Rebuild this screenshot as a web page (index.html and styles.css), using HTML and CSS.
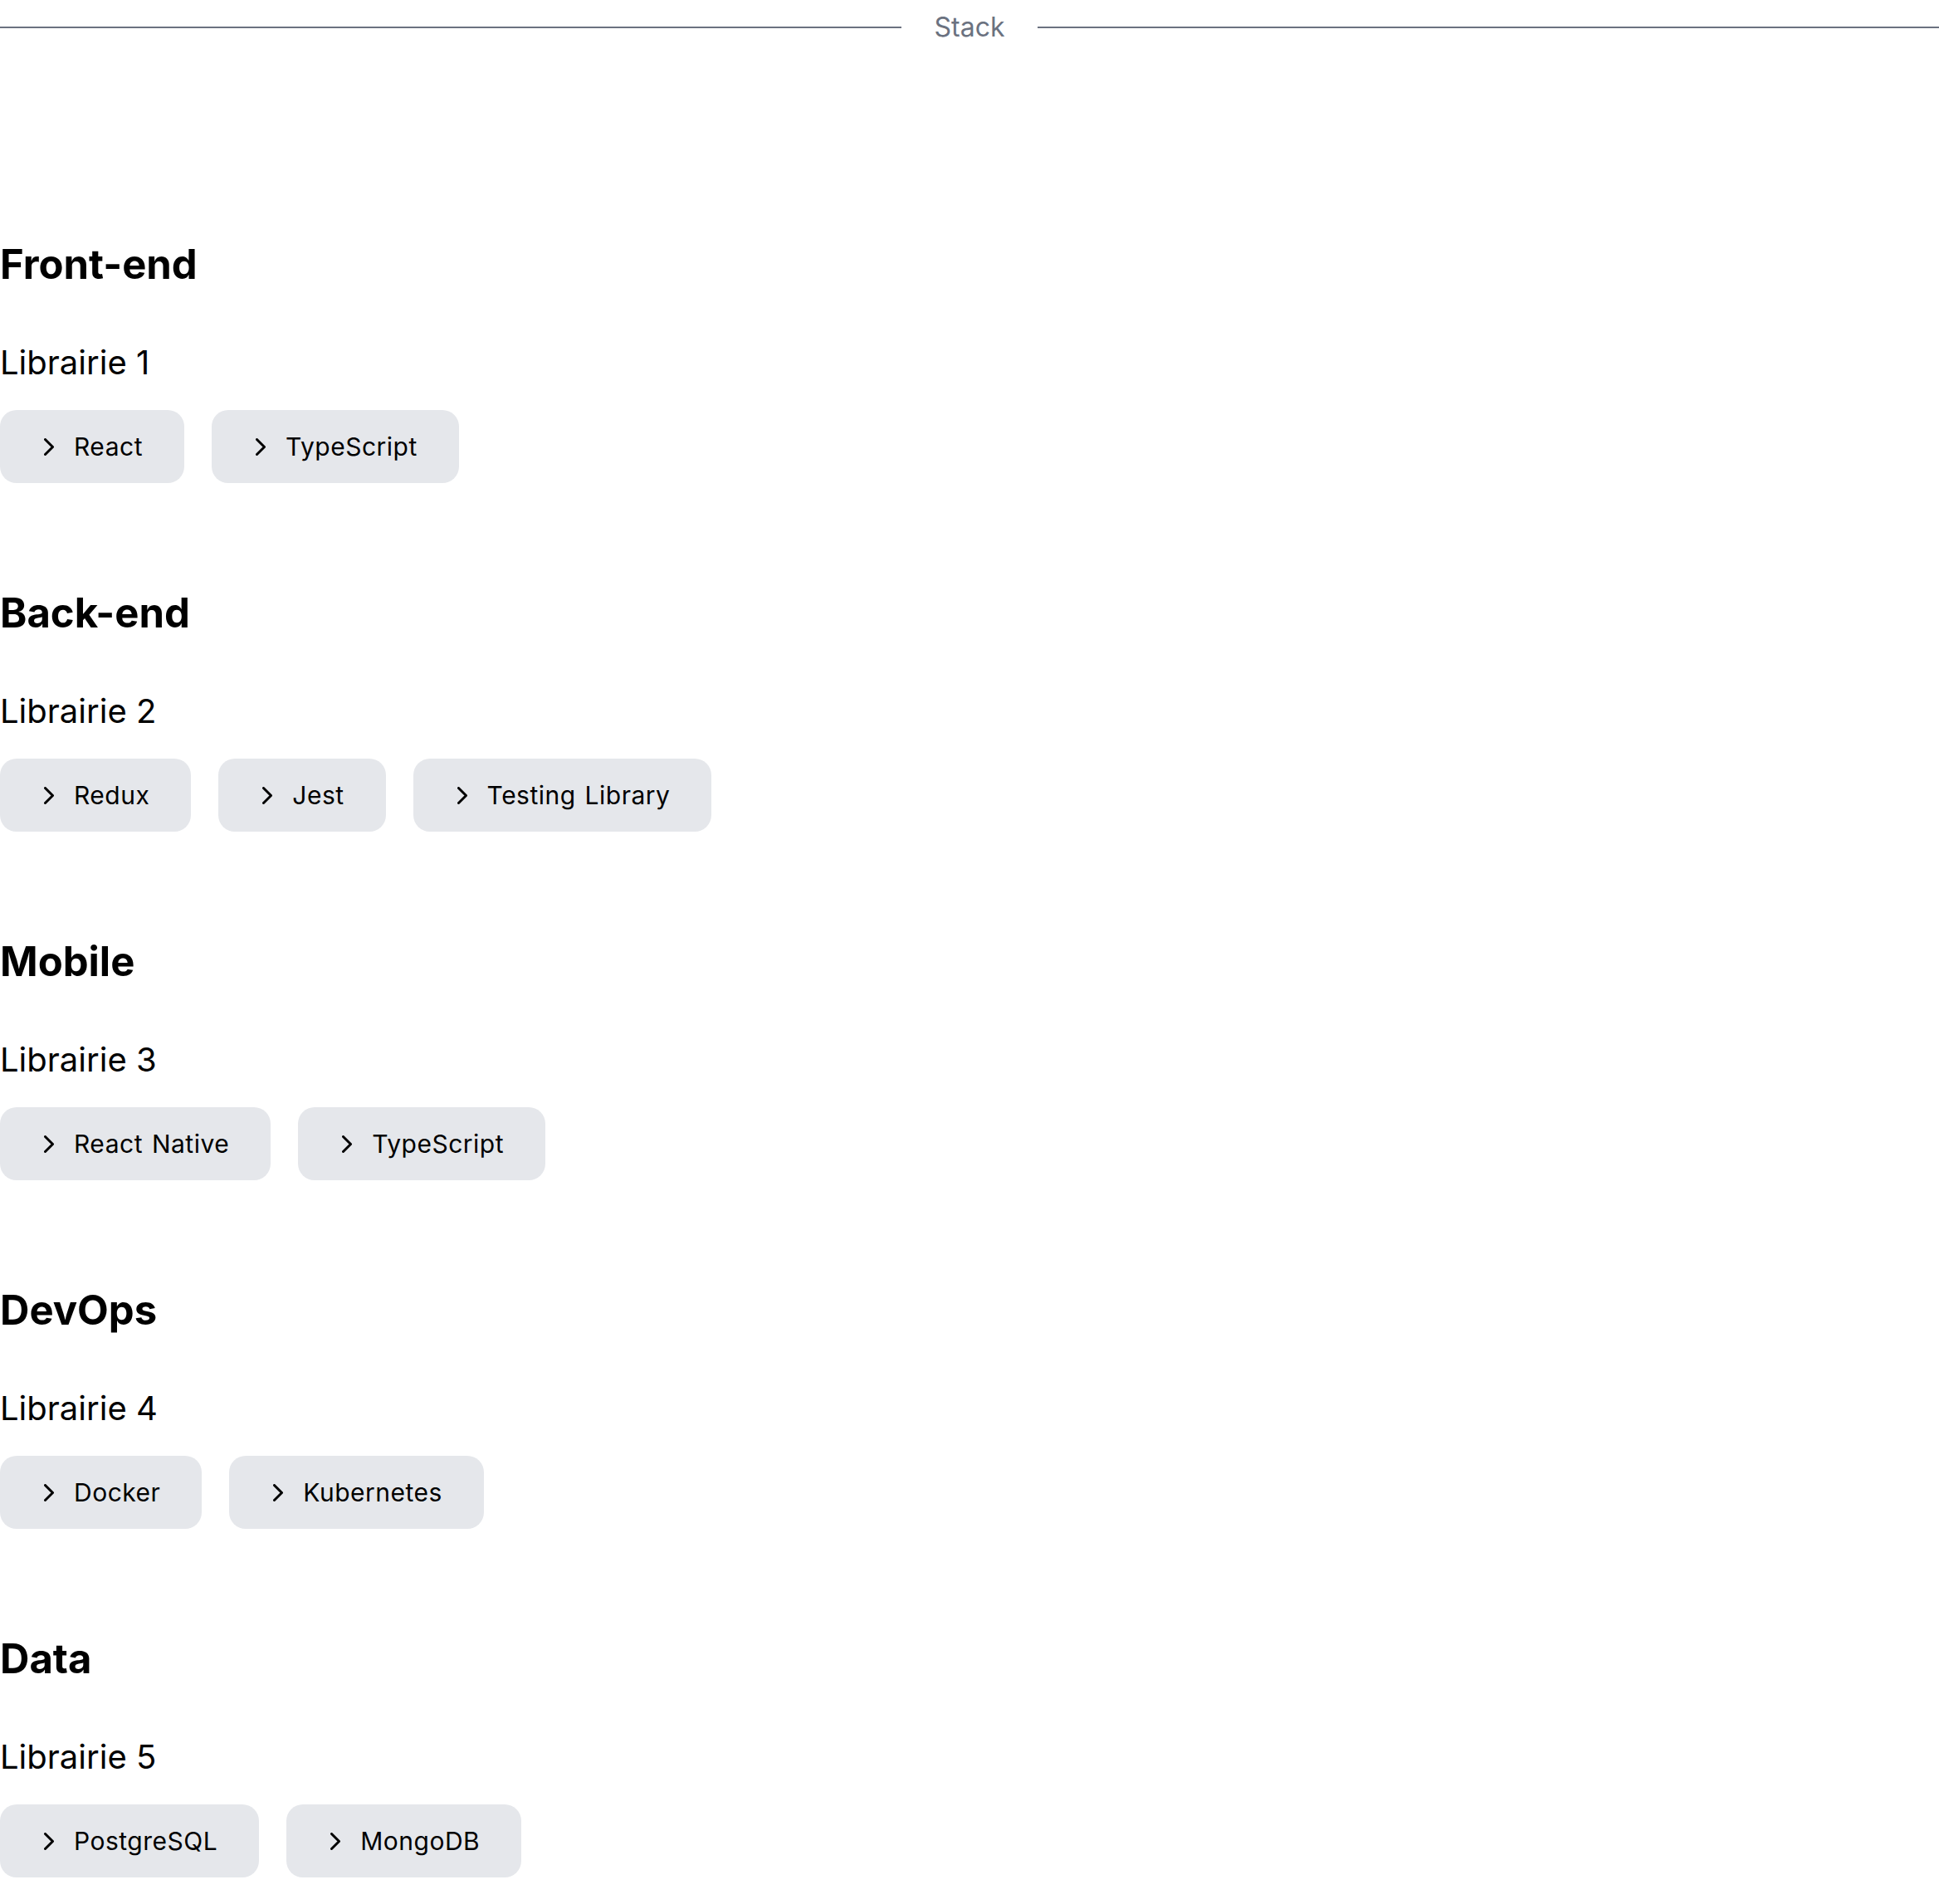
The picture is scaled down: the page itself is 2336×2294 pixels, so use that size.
FILE: index.html
```html
<!DOCTYPE html>
<html lang="fr">
<head>
<meta charset="utf-8">
<title>Stack</title>
<link rel="stylesheet" href="styles.css">
</head>
<body>
<div class="divider">
  <span class="divider-line"></span>
  <span class="divider-text">Stack</span>
  <span class="divider-line"></span>
</div>
<main class="sections">
  <section class="section">
    <h2 class="section-title">Front-end</h2>
    <h3 class="lib">Librairie 1</h3>
    <div class="pills">
      <span class="pill"><svg class="chev" viewBox="0 0 12 21"><path d="M1.5 1.5 10.5 10.5 1.5 19.5"/></svg>React</span>
      <span class="pill"><svg class="chev" viewBox="0 0 12 21"><path d="M1.5 1.5 10.5 10.5 1.5 19.5"/></svg>TypeScript</span>
    </div>
  </section>
  <section class="section">
    <h2 class="section-title">Back-end</h2>
    <h3 class="lib">Librairie 2</h3>
    <div class="pills">
      <span class="pill"><svg class="chev" viewBox="0 0 12 21"><path d="M1.5 1.5 10.5 10.5 1.5 19.5"/></svg>Redux</span>
      <span class="pill"><svg class="chev" viewBox="0 0 12 21"><path d="M1.5 1.5 10.5 10.5 1.5 19.5"/></svg>Jest</span>
      <span class="pill"><svg class="chev" viewBox="0 0 12 21"><path d="M1.5 1.5 10.5 10.5 1.5 19.5"/></svg>Testing Library</span>
    </div>
  </section>
  <section class="section">
    <h2 class="section-title">Mobile</h2>
    <h3 class="lib">Librairie 3</h3>
    <div class="pills">
      <span class="pill"><svg class="chev" viewBox="0 0 12 21"><path d="M1.5 1.5 10.5 10.5 1.5 19.5"/></svg>React Native</span>
      <span class="pill"><svg class="chev" viewBox="0 0 12 21"><path d="M1.5 1.5 10.5 10.5 1.5 19.5"/></svg>TypeScript</span>
    </div>
  </section>
  <section class="section">
    <h2 class="section-title">DevOps</h2>
    <h3 class="lib">Librairie 4</h3>
    <div class="pills">
      <span class="pill"><svg class="chev" viewBox="0 0 12 21"><path d="M1.5 1.5 10.5 10.5 1.5 19.5"/></svg>Docker</span>
      <span class="pill"><svg class="chev" viewBox="0 0 12 21"><path d="M1.5 1.5 10.5 10.5 1.5 19.5"/></svg>Kubernetes</span>
    </div>
  </section>
  <section class="section">
    <h2 class="section-title">Data</h2>
    <h3 class="lib">Librairie 5</h3>
    <div class="pills">
      <span class="pill"><svg class="chev" viewBox="0 0 12 21"><path d="M1.5 1.5 10.5 10.5 1.5 19.5"/></svg>PostgreSQL</span>
      <span class="pill"><svg class="chev" viewBox="0 0 12 21"><path d="M1.5 1.5 10.5 10.5 1.5 19.5"/></svg>MongoDB</span>
    </div>
  </section>
</main>
</body>
</html>
```
FILE: styles.css
```css
html, body {
  margin: 0;
  padding: 0;
  background: #ffffff;
}
body {
  font-family: Inter, "Noto Sans", sans-serif;
  color: #000000;
}
.divider {
  display: flex;
  align-items: center;
  height: 66px;
  gap: 40px;
}
.divider-line {
  flex: 1;
  height: 2px;
  background: #6b7280;
}
.divider-text {
  font-size: 32px;
  line-height: 40px;
  color: #6b7280;
}
.sections {
  display: flex;
  flex-direction: column;
  gap: 127px;
  margin-top: 223px;
}
.section-title {
  margin: 0;
  font-size: 49px;
  line-height: 60px;
  font-weight: 700;
}
.lib {
  margin: 64px 0 0;
  font-size: 40px;
  line-height: 48px;
  font-weight: 400;
}
.pills {
  display: flex;
  gap: 33px;
  margin-top: 33px;
}
.pill {
  display: flex;
  align-items: center;
  gap: 24px;
  height: 88px;
  padding: 0 50px 0 53px;
  border-radius: 20px;
  background: #e5e7eb;
  font-size: 30px;
  letter-spacing: 0.5px;
  word-spacing: 2px;
  color: #000000;
}
.chev {
  width: 12px;
  height: 21px;
  fill: none;
  stroke: #000000;
  stroke-width: 3;
  stroke-linecap: round;
  stroke-linejoin: round;
}
```
